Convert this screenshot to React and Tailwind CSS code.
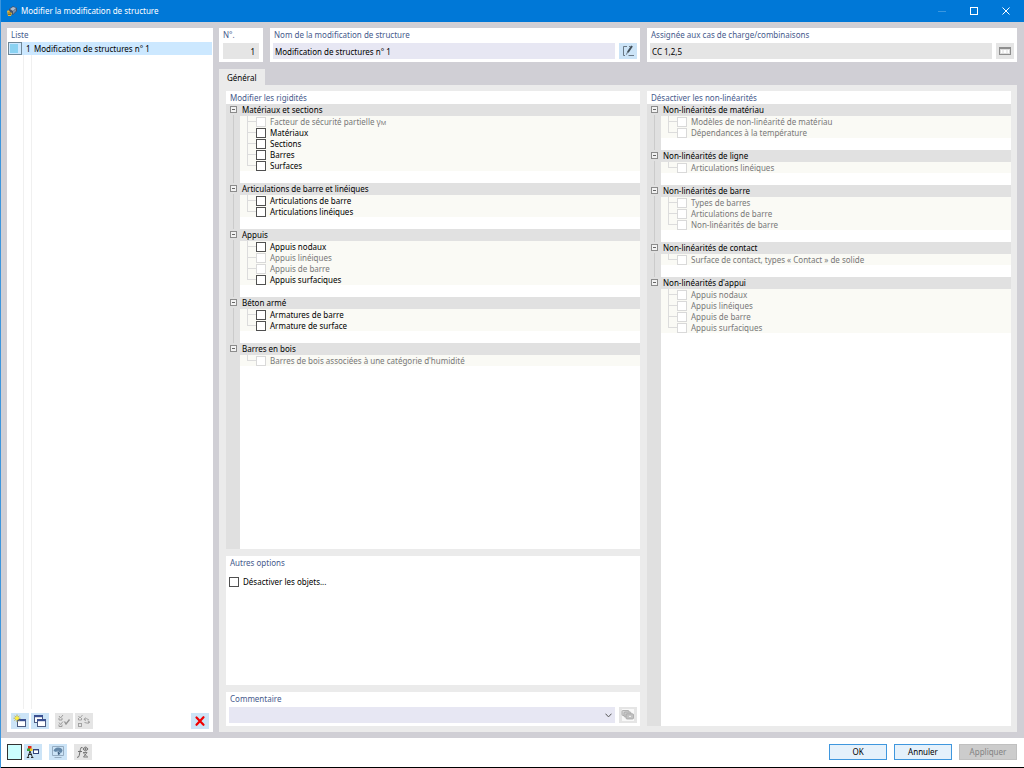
import React from 'react';
import clsx from 'clsx';

const rigidites = [
    {
        title: 'Matériaux et sections',
        items: [
            { label: 'Facteur de sécurité partielle γ', sub: 'M', disabled: true },
            { label: 'Matériaux' },
            { label: 'Sections' },
            { label: 'Barres' },
            { label: 'Surfaces' },
        ],
    },
    {
        title: 'Articulations de barre et linéiques',
        items: [{ label: 'Articulations de barre' }, { label: 'Articulations linéiques' }],
    },
    {
        title: 'Appuis',
        items: [
            { label: 'Appuis nodaux' },
            { label: 'Appuis linéiques', disabled: true },
            { label: 'Appuis de barre', disabled: true },
            { label: 'Appuis surfaciques' },
        ],
    },
    {
        title: 'Béton armé',
        items: [{ label: 'Armatures de barre' }, { label: 'Armature de surface' }],
    },
    {
        title: 'Barres en bois',
        items: [{ label: "Barres de bois associées à une catégorie d'humidité", disabled: true }],
    },
];

const nonLinearites = [
    {
        title: 'Non-linéarités de matériau',
        items: [
            { label: 'Modèles de non-linéarité de matériau', disabled: true },
            { label: 'Dépendances à la température', disabled: true },
        ],
    },
    {
        title: 'Non-linéarités de ligne',
        items: [{ label: 'Articulations linéiques', disabled: true }],
    },
    {
        title: 'Non-linéarités de barre',
        items: [
            { label: 'Types de barres', disabled: true },
            { label: 'Articulations de barre', disabled: true },
            { label: 'Non-linéarités de barre', disabled: true },
        ],
    },
    {
        title: 'Non-linéarités de contact',
        items: [{ label: 'Surface de contact, types « Contact » de solide', disabled: true }],
    },
    {
        title: "Non-linéarités d'appui",
        items: [
            { label: 'Appuis nodaux', disabled: true },
            { label: 'Appuis linéiques', disabled: true },
            { label: 'Appuis de barre', disabled: true },
            { label: 'Appuis surfaciques', disabled: true },
        ],
    },
];

function AppIcon() {
    return (
        <svg width="12" height="12" viewBox="0 0 12 12">
            <path d="M3 4 L7 1 L11 3 L11 6 L7 10 L3 8 Z" fill="#44546c" />
            <path d="M4 4 L7 2 L10 3 L7 6 Z" fill="#a9bcd2" />
            <path d="M7 6 L10 4 L10 6 L7 9 Z" fill="#7d90aa" />
            <path d="M1 6 Q3 4 4 7 L6 8 L5 11 L2 11 Z" fill="#e8b73a" />
            <path d="M2 8 h3 M2 9.5 h3" stroke="#5e4c1c" strokeWidth="0.7" />
        </svg>
    );
}

function MiniWindow({ x, y, w = 9, h = 7 }) {
    return (
        <g>
            <rect x={x + 0.5} y={y + 0.5} width={w - 1} height={h - 1} fill="#fff" stroke="#4a5a80" />
            <rect x={x} y={y} width={w} height="2.2" fill="#3a5092" />
        </g>
    );
}

function NewIcon() {
    return (
        <svg width="14" height="14" viewBox="0 0 14 14">
            <MiniWindow x={4} y={5} w={9} h={8} />
            <path d="M4 0.5 V8 M0.5 4.2 H7.5 M1.5 1.7 L6.5 6.7 M6.5 1.7 L1.5 6.7" stroke="#b8a428" strokeWidth="0.8" />
            <circle cx="4" cy="4.2" r="1.8" fill="#ffee3a" />
        </svg>
    );
}

function CopyIcon() {
    return (
        <svg width="14" height="14" viewBox="0 0 14 14">
            <MiniWindow x={1} y={1} w={9} h={8} />
            <MiniWindow x={4} y={5} w={9} h={8} />
        </svg>
    );
}

function ChecksIcon() {
    return (
        <svg width="14" height="14" viewBox="0 0 14 14" fill="none" stroke="#949494">
            <path d="M2 2 L3.5 4 L6 1 M2 4 v2 h3 v-2 M2 8.5 L3.5 10.5 L6 7.5 M2 10.5 v2 h3 v-2" strokeWidth="0.9" />
            <path d="M7.5 7.5 L9 10 L12.5 5.5" strokeWidth="1.3" />
        </svg>
    );
}

function InvertIcon() {
    return (
        <svg width="14" height="14" viewBox="0 0 14 14" fill="none" stroke="#9c9c9c">
            <path d="M1.5 2 L3 4 L5.5 1 M1.5 4 v2 h3 v-2" strokeWidth="0.9" />
            <rect x="1.5" y="9.5" width="3" height="3" strokeWidth="0.9" />
            <path d="M7 5.5 q2.5 -2 5 0.5 M8.5 3.5 L7 5.5 l2 1 M12.5 8 q-2 2 -5 0.5 M11 9.8 L12.7 8 l-2 -1" strokeWidth="0.9" />
        </svg>
    );
}

function DeleteIcon() {
    return (
        <svg width="12" height="12" viewBox="0 0 12 12">
            <path d="M2.5 2.5 L9.5 9.8 M9.5 2.2 L2.5 9.8" stroke="#f00000" strokeWidth="2.2" strokeLinecap="round" />
        </svg>
    );
}

function EditIcon() {
    return (
        <svg width="14" height="14" viewBox="0 0 14 14" fill="none" stroke="#5d6c78">
            <path d="M6 2.5 H2.5 V11.5 H4" strokeWidth="0.9" />
            <path d="M8 2.5 h1.5 M7.5 11.5 H13" strokeWidth="0.9" />
            <path d="M11 2 L6.8 8.2" strokeWidth="2" stroke="#43505a" />
            <path d="M6.6 8 L5.4 10.6" strokeWidth="0.9" />
        </svg>
    );
}

function DialogIcon() {
    return (
        <svg width="14" height="12" viewBox="0 0 14 12">
            <rect x="1.5" y="2.5" width="11" height="7" fill="#dcdcdc" stroke="#8e8e8e" />
            <rect x="1" y="2" width="12" height="2" fill="#8e8e8e" />
            <path d="M3 6.5 h1.5 M5.5 6.5 h3 M9.5 6.5 h1.5" stroke="#fff" strokeWidth="3" />
        </svg>
    );
}

function StackIcon() {
    return (
        <svg width="14" height="12" viewBox="0 0 14 12" stroke="#a5a5a5" strokeWidth="0.8">
            <rect x="1" y="0" width="12" height="12" fill="#f8f8f8" stroke="none" />
            <rect x="1" y="1.5" width="7" height="5" rx="1" fill="#d6d6d6" />
            <rect x="3" y="3" width="7" height="5" rx="1" fill="#cacaca" />
            <rect x="5" y="4.8" width="7.5" height="5.2" rx="1" fill="#c2c2c2" />
            <path d="M8 7.4 h2" stroke="#fff" />
        </svg>
    );
}

function DisplayIcon() {
    return (
        <svg width="14" height="14" viewBox="0 0 14 14">
            <rect x="2" y="1" width="3.5" height="3" fill="#e0291d" />
            <rect x="1" y="3.5" width="3" height="2.5" fill="#37a53a" />
            <rect x="4" y="3.5" width="2.5" height="2.5" fill="#eccb22" />
            <path d="M4 6 L2 12 M4 6 L6.3 12 M2.5 9.5 h3.5 M0.8 12.5 h2.4 M5 12.5 h2.4" stroke="#2c2c2c" />
            <rect x="7.5" y="4.5" width="5" height="4" fill="#fff" stroke="#34457c" />
            <path d="M7 4.7 h6" stroke="#34457c" strokeWidth="1.4" />
        </svg>
    );
}

function ViewIcon() {
    return (
        <svg width="14" height="14" viewBox="0 0 14 14">
            <path d="M1.5 1.5 H12.5 V10.5 H1.5 Z M3.5 12.5 H10.5" fill="none" stroke="#8fa5ba" strokeWidth="0.9" />
            <path d="M2.5 6 Q3.5 2.5 7 2.5 Q11 2.5 11.5 5.5 Q11 8 9 8 L7 5.5 L5 7 Z" fill="#6387a8" />
            <path d="M6.5 5.5 L9.5 9 L7 10 Z" fill="#3f5f80" />
        </svg>
    );
}

function FormulaIcon() {
    return (
        <svg width="14" height="14" viewBox="0 0 14 14" fill="none" stroke="#707070">
            <path d="M6.5 2.5 Q4.8 1.5 4.4 4.5 L3.2 10.5 Q2.8 12.8 1 12.3 M2 6.5 h4" />
            <path d="M7 4 Q9.5 0 12 4 Q9.5 8 7 4 Z" strokeWidth="0.9" />
            <path d="M7 4 h5 M9.5 2.5 v3" strokeWidth="0.8" />
            <path d="M7 7.5 h4 L7.5 12 h4.5 M7.5 8 L11 11.5" strokeWidth="0.9" />
        </svg>
    );
}

function IconButton({ label, muted, children }) {
    return (
        <button
            type="button"
            aria-label={label}
            disabled={muted}
            className={clsx('flex h-4 w-[18px] shrink-0 items-center justify-center', muted ? 'bg-[#e5e5e5]' : 'bg-[#cce4f7]')}
        >
            {children}
        </button>
    );
}

function PanelTitle({ children, htmlFor }) {
    const Tag = htmlFor ? 'label' : 'h2';
    return (
        <Tag htmlFor={htmlFor} className="block h-[13px] px-1 leading-[13px] text-[#465a8c]">
            {children}
        </Tag>
    );
}

function TreeItem({ item, last }) {
    return (
        <label className={clsx('flex h-[11px] items-center bg-[#fafaf5] pl-[7px]', item.disabled ? 'text-[#787878]' : 'text-black')}>
            <span className="flex h-full w-[9px] flex-col">
                <span className="h-[6px] border-b border-l border-[#dcdcdc]" />
                <span className={clsx('grow', !last && 'border-l border-[#dcdcdc]')} />
            </span>
            <input
                type="checkbox"
                disabled={item.disabled}
                className="mr-1 size-[10px] shrink-0 appearance-none border border-[#505050] bg-white checked:bg-[#0078d7] disabled:border-[#d9d9d9]"
            />
            <span className="whitespace-nowrap">
                {item.label}
                {item.sub && <sub className="bottom-0 text-[6px]">{item.sub}</sub>}
            </span>
        </label>
    );
}

function Tree({ groups }) {
    return (
        <div className="flex grow flex-col">
            {groups.map((group, i) => {
                const end = i === groups.length - 1;
                return (
                    <section key={group.title} className="flex">
                        <div className="flex w-[14px] flex-col items-center bg-[#e0e0e0]">
                            <button
                                type="button"
                                aria-label={group.title}
                                className="my-[2px] flex size-[7px] shrink-0 items-center justify-center border border-[#8c8c8c] bg-[#f2f2f2]"
                            >
                                <span className="h-px w-[3px] bg-[#666666]" />
                            </button>
                            {!end && <span className="w-px grow bg-[#cbcbcb]" />}
                        </div>
                        <div className={clsx('grow', !end && 'pb-3')}>
                            <h3 className="h-3 bg-[#e1e1e1] pl-[2px] leading-3 text-black">{group.title}</h3>
                            {group.items.map((item, n) => (
                                <TreeItem key={item.label} item={item} last={n === group.items.length - 1} />
                            ))}
                        </div>
                    </section>
                );
            })}
            <div className="w-[14px] grow bg-[#e0e0e0]" />
        </div>
    );
}

function TitleBar() {
    return (
        <header className="flex h-[22px] shrink-0 items-center bg-[#0078d7] pr-[2px] pl-[5px] text-white">
            <AppIcon />
            <h1 className="ml-[3px] grow">Modifier la modification de structure</h1>
            <button type="button" aria-label="Réduire" disabled className="flex h-full w-8 items-center justify-center">
                <span className="h-px w-2 bg-[#3a97e0]" />
            </button>
            <button type="button" aria-label="Agrandir" className="flex h-full w-8 items-center justify-center">
                <span className="size-2 border border-white" />
            </button>
            <button type="button" aria-label="Fermer" className="flex h-full w-8 items-center justify-center">
                <svg width="8" height="8" viewBox="0 0 8 8">
                    <path d="M0.5 0.5 L7.5 7.5 M7.5 0.5 L0.5 7.5" stroke="#fff" />
                </svg>
            </button>
        </header>
    );
}

function ListPanel() {
    return (
        <aside className="flex w-[206px] shrink-0 flex-col bg-white px-px">
            <h2 className="h-[14px] px-[3px] leading-[14px] text-[#465a8c]">Liste</h2>
            <button type="button" className="flex h-[13px] items-center bg-[#cce8ff] text-left text-black">
                <span className="h-[13px] w-[14px] border border-[#6f8797] bg-[#cce8ff] p-px">
                    <span className="block h-full w-2 bg-[#8ad2f2]" />
                </span>
                <span className="w-3 pl-1">1</span>
                <span>Modification de structures n° 1</span>
            </button>
            <div className="flex grow">
                <span className="w-4 border-r border-[#f0f0f0]" />
                <span className="w-2 border-r border-[#f0f0f0]" />
            </div>
            <div className="flex gap-[2px] px-[3px] pt-1 pb-[3px]">
                <IconButton label="Nouveau"><NewIcon /></IconButton>
                <IconButton label="Copier"><CopyIcon /></IconButton>
                <span className="w-[2px]" />
                <IconButton label="Tout sélectionner" muted><ChecksIcon /></IconButton>
                <IconButton label="Inverser la sélection" muted><InvertIcon /></IconButton>
                <span className="grow" />
                <IconButton label="Supprimer"><DeleteIcon /></IconButton>
            </div>
        </aside>
    );
}

function HeaderFields() {
    return (
        <div className="grid grid-cols-[44px_1fr_1fr] gap-[7px]">
            <div className="bg-white pb-[3px]">
                <PanelTitle htmlFor="numero">N°.</PanelTitle>
                <div className="px-1 pt-[2px]">
                    <input id="numero" readOnly defaultValue="1" className="h-4 w-full bg-[#e5e5e5] px-1 text-right" />
                </div>
            </div>
            <div className="bg-white pb-[3px]">
                <PanelTitle htmlFor="nom">Nom de la modification de structure</PanelTitle>
                <div className="flex gap-1 px-[3px] pt-[2px]">
                    <input id="nom" defaultValue="Modification de structures n° 1" className="h-4 min-w-0 grow bg-[#e7e7f3] px-[2px]" />
                    <IconButton label="Modifier le nom"><EditIcon /></IconButton>
                </div>
            </div>
            <div className="bg-white pb-[3px]">
                <PanelTitle htmlFor="assignee">Assignée aux cas de charge/combinaisons</PanelTitle>
                <div className="flex gap-1 px-[3px] pt-[2px]">
                    <input id="assignee" readOnly defaultValue="CC 1,2,5" className="h-4 min-w-0 grow bg-[#e5e5e5] px-[2px]" />
                    <IconButton label="Détails" muted><DialogIcon /></IconButton>
                </div>
            </div>
        </div>
    );
}

function Footer() {
    const action = 'h-4 w-[58px] border';
    return (
        <footer className="flex shrink-0 items-start border-b border-black bg-white pt-[6px] pr-[7px] pb-[7px] pl-[6px]">
            <button type="button" aria-label="Couleur" className="mr-[2px] h-4 w-[15px] border border-[#333333] bg-[#ccffff]" />
            <IconButton label="Affichage"><DisplayIcon /></IconButton>
            <span className="w-[7px]" />
            <IconButton label="Vue"><ViewIcon /></IconButton>
            <span className="w-[7px]" />
            <IconButton label="Formule" muted><FormulaIcon /></IconButton>
            <div className="ml-auto flex gap-[7px]">
                <button type="button" className={clsx(action, 'border-[#3f97de] bg-[#e5f1fb]')}>OK</button>
                <button type="button" className={clsx(action, 'border-[#3f97de] bg-[#e5f1fb]')}>Annuler</button>
                <button type="button" disabled className={clsx(action, 'border-[#c0c0c0] bg-[#cccccc] text-[#838383]')}>Appliquer</button>
            </div>
        </footer>
    );
}

export default function App() {
    return (
        <div className="flex h-screen flex-col border-l border-[#3d95dc] bg-[#d0cfd5] font-['Noto_Sans','Open_Sans',sans-serif] text-[8px] leading-3 text-black">
            <TitleBar />
            <main className="flex min-h-0 grow gap-[6px] p-[6px] pr-[7px]">
                <ListPanel />
                <div className="flex min-w-0 grow flex-col">
                    <HeaderFields />
                    <div role="tablist" className="mt-[7px] flex">
                        <button type="button" role="tab" aria-selected="true" className="h-4 bg-[#ebebeb] px-2 pt-[2px]">
                            Général
                        </button>
                    </div>
                    <div className="grid min-h-0 grow grid-cols-[414fr_364fr] gap-[7px] bg-[#ebebeb] p-[6px] pl-[7px]">
                        <div className="flex flex-col gap-[7px]">
                            <div className="flex grow flex-col bg-white">
                                <PanelTitle>Modifier les rigidités</PanelTitle>
                                <Tree groups={rigidites} />
                            </div>
                            <div className="h-[129px] bg-white">
                                <PanelTitle>Autres options</PanelTitle>
                                <label className="mt-[7px] flex items-center gap-1 px-[3px]">
                                    <input type="checkbox" className="size-[10px] appearance-none border border-[#505050] bg-white checked:bg-[#0078d7]" />
                                    Désactiver les objets...
                                </label>
                            </div>
                            <div className="bg-white pb-[3px]">
                                <PanelTitle htmlFor="commentaire">Commentaire</PanelTitle>
                                <div className="flex gap-1 px-[3px] pt-[2px]">
                                    <div className="relative grow">
                                        <select id="commentaire" className="h-4 w-full appearance-none bg-[#e7e7f3] px-1">
                                            <option value="" />
                                        </select>
                                        <svg width="7" height="5" viewBox="0 0 7 5" className="pointer-events-none absolute top-[6px] right-[3px]">
                                            <path d="M0.5 0.7 L3.5 3.9 L6.5 0.7" fill="none" stroke="#555" />
                                        </svg>
                                    </div>
                                    <IconButton label="Commentaires" muted><StackIcon /></IconButton>
                                </div>
                            </div>
                        </div>
                        <div className="flex flex-col bg-white">
                            <PanelTitle>Désactiver les non-linéarités</PanelTitle>
                            <Tree groups={nonLinearites} />
                        </div>
                    </div>
                </div>
            </main>
            <Footer />
        </div>
    );
}
